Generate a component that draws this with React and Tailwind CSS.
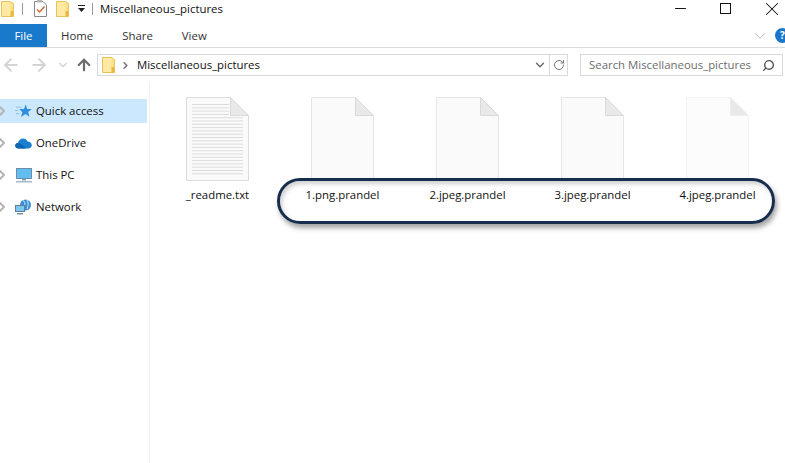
import React from 'react';
import { ChevronDown, ChevronRight, Minus, X, ArrowLeft, ArrowRight, ArrowUp, RotateCw, Search } from 'lucide-react';

const font = { fontFamily: '"Open Sans", "Noto Sans", sans-serif' };

const Folder = ({ className }) => (
  <svg viewBox="0 0 13 16" className={className}>
    <path d="M.5.5h9l3 2v13H.5z" fill="#fde08a" stroke="#e8c35c" />
    <path d="M1 1h8.500v14H1z" fill="#ffe9a3" />
    <rect x="9.500" y="10" width="3" height="5.500" fill="#e9b93f" />
  </svg>
);

const Checklist = () => (
  <svg viewBox="0 0 13 17" className="h-[17px] w-[13px]">
    <path d="M.5 1.500h8.500l3.500 3.500v11.500H.5z" fill="#fff" stroke="#8a8a8a" />
    <rect x="3" y="0" width="5" height="2.500" fill="#b5b5b5" />
    <path d="M3 9.500l2.500 2.500L10.500 6.500" fill="none" stroke="#d9622b" strokeWidth="1.400" />
  </svg>
);

const StarIcon = () => (
  <svg viewBox="0 0 16 14" className="h-[15px] w-[17px]">
    <path d="M10 .5l1.500 4.200H15.800l-3.400 2.700 1.200 4.600L10 9.400l-4.400 2.800 1.400-4.600-3-2.900h4.500z" fill="#2f8fde" />
    <path d="M1 3h5M0 6h3M1 9h3" stroke="#8cc4ee" strokeWidth="1" />
  </svg>
);

const CloudIcon = () => (
  <svg viewBox="0 0 17 11" className="h-[11px] w-[17px]">
    <path d="M3.500 10.500C1.500 10.500.2 9.300.2 7.800c0-1.500 1.100-2.600 2.700-2.700C3.600 2.400 5.700.6 8.200.6c2 0 3.600 1.100 4.400 2.800 2.400 0 4.200 1.600 4.200 3.700 0 2-1.500 3.400-3.400 3.400z" fill="#1a7fd1" />
    <path d="M3.500 10.500C1.500 10.500.2 9.300.2 7.800c0-1.400 1-2.400 2.400-2.700 2.700.2 6 2 8.200 5.400z" fill="#0f64b0" />
  </svg>
);

const PcIcon = () => (
  <svg viewBox="0 0 16 15" className="h-[15px] w-[16px]">
    <rect x=".5" y=".5" width="15" height="10" fill="#62bdf0" stroke="#6f8ea8" />
    <rect x="6" y="11" width="4" height="1.500" fill="#8aa2b5" />
    <rect y="13" width="16" height="1.500" fill="#a8bac8" />
  </svg>
);

const NetworkIcon = () => (
  <svg viewBox="0 0 17 16" className="h-[16px] w-[17px]">
    <circle cx="10.500" cy="6" r="5.500" fill="#3a8fd6" />
    <path d="M8 1.500c2 1 2.500 3 1.500 5M12 1c1.500 2 1.500 6 0 9" stroke="#cfe6f7" fill="none" />
    <rect x=".5" y="6.500" width="9" height="6" fill="#7cc8f2" stroke="#5f7f98" />
    <rect x="2" y="14" width="6" height="1.500" fill="#7d93a5" />
  </svg>
);

const FileIcon = ({ lines, faded }) => (
  <svg viewBox="0 0 63 84" className="h-[84px] w-[63px]">
    <path d="M.5.5h44l18 18v65H.5z" fill={faded ? '#fcfcfc' : '#fafafa'} stroke={faded ? '#f2f2f2' : lines ? '#dcdcdc' : '#e6e6e6'} />
    {lines && Array.from({ length: 22 }, (_, i) => (
      <rect key={i} x="6" y={7 + i * 3.3} width={i < 4 ? 37 : 51} height="1" fill="#dcdcdc" />
    ))}
    <path d="M44.500.5v18h18z" fill="#e9e9e9" stroke={faded ? '#ededed' : '#d9d9d9'} />
  </svg>
);

const navItems = [
  { label: 'Quick access', icon: <StarIcon />, active: true },
  { label: 'OneDrive', icon: <CloudIcon /> },
  { label: 'This PC', icon: <PcIcon /> },
  { label: 'Network', icon: <NetworkIcon /> },
];

const files = [
  { name: '_readme.txt', lines: true },
  { name: '1.png.prandel' },
  { name: '2.jpeg.prandel' },
  { name: '3.jpeg.prandel' },
  { name: '4.jpeg.prandel', faded: true },
];

export default function App() {
  return (
    <div style={font} className="relative flex h-[463px] w-[785px] flex-col overflow-hidden bg-white text-[11.4px] text-[#111]">
      {/* title bar */}
      <div className="flex h-[24px] items-center pb-[7px] pl-[1px]">
        <Folder className="h-[16px] w-[13px]" />
        <div className="ml-[8px] h-[12px] w-px bg-[#999]" />
        <div className="ml-[11px]"><Checklist /></div>
        <Folder className="ml-[9px] h-[16px] w-[13px]" />
        <svg viewBox="0 0 9 8" className="ml-[8px] h-[8px] w-[9px]">
          <rect x="1" y="0" width="7" height="1" fill="#222" />
          <path d="M1 3h7L4.500 7z" fill="#222" />
        </svg>
        <div className="ml-[6px] h-[12px] w-px bg-[#999]" />
        <span className="ml-[7px]">Miscellaneous_pictures</span>
        <div className="ml-auto flex items-center">
          <Minus size={17} strokeWidth={1.4} />
          <div className="ml-[31px] h-[11px] w-[11px] border border-[#111]" />
          <X size={22} strokeWidth={1.1} className="ml-[30px] mr-[2px]" />
        </div>
      </div>

      {/* ribbon tabs */}
      <div className="flex h-[24px] items-center border-b border-[#dadbdc]">
        <div className="flex h-[23px] w-[47px] items-center justify-center bg-[#1979ca] text-white">File</div>
        <span className="ml-[14px] text-[#333]">Home</span>
        <span className="ml-[29px] text-[#333]">Share</span>
        <span className="ml-[29px] text-[#333]">View</span>
        <ChevronDown size={18} strokeWidth={1} className="ml-auto mr-[6px] text-[#999]" />
        <div className="mr-[-5px] flex h-[15px] w-[15px] items-center justify-center rounded-full bg-[#1b75c9] text-[10px] font-bold text-white">?</div>
      </div>

      {/* address row */}
      <div className="flex h-[35px] items-start pt-[6px]">
        <div className="flex h-[22px] items-center">
          <ArrowLeft size={20} strokeWidth={2.4} className="ml-[1px] text-[#d4d4d4]" />
          <ArrowRight size={20} strokeWidth={2.4} className="ml-[8px] text-[#d4d4d4]" />
          <ChevronDown size={14} strokeWidth={2} className="ml-[7px] text-[#d0d0d0]" />
          <ArrowUp size={18} strokeWidth={3} className="ml-[5px] text-[#6d6d6d]" />
        </div>
        <div className="ml-[4px] flex h-[22px] w-[471px] items-center border border-[#d9d9d9]">
          <Folder className="ml-[4px] h-[16px] w-[13px]" />
          <ChevronRight size={11} strokeWidth={3.4} className="ml-[5px] text-[#777]" />
          <span className="ml-[6px]">Miscellaneous_pictures</span>
          <ChevronDown size={14} strokeWidth={2.4} className="ml-auto mr-[2px] text-[#666]" />
          <div className="flex h-full w-[18px] items-center justify-center border-l border-[#d9d9d9]">
            <RotateCw size={12} className="text-[#777]" />
          </div>
        </div>
        <div className="ml-[12px] flex h-[22px] w-[203px] items-center border border-[#d9d9d9] pl-[8px] text-[#6d6d6d]">
          <span>Search Miscellaneous_pictures</span>
          <Search size={13} strokeWidth={2.6} className="ml-auto mr-[7px] -scale-x-100 text-[#555]" />
        </div>
      </div>

      {/* body */}
      <div className="flex flex-1">
        <aside className="w-[150px] border-r border-[#f0f0f0] pt-[16px]">
          {navItems.map((item, i) => (
            <div key={item.label} className={`flex h-[24px] w-[147px] items-center ${i > 0 ? 'mt-[8px]' : ''} ${item.active ? 'bg-[#cce8ff]' : ''}`}>
              <ChevronRight size={16} strokeWidth={3} className="ml-[-6px] text-[#b5b5b5]" />
              <div className="ml-[5px] flex w-[17px] justify-center">{item.icon}</div>
              <span className="ml-[4px]">{item.label}</span>
            </div>
          ))}
        </aside>
        <main className="flex items-start pl-[5px] pt-[14px]">
          {files.map((file) => (
            <div key={file.name} className="flex w-[125px] flex-col items-center">
              <FileIcon lines={file.lines} faded={file.faded} />
              <span className="mt-[5px]">{file.name}</span>
            </div>
          ))}
        </main>
      </div>

      {/* hand-drawn highlight around the encrypted files */}
      <div className="absolute left-[277px] top-[178px] h-[46px] w-[498px] rounded-[23px] border-[3px] border-[#172d4d] shadow-[2px_4px_5px_rgba(90,90,90,0.55),inset_2px_3px_4px_rgba(120,120,120,0.35)]" />
    </div>
  );
}
